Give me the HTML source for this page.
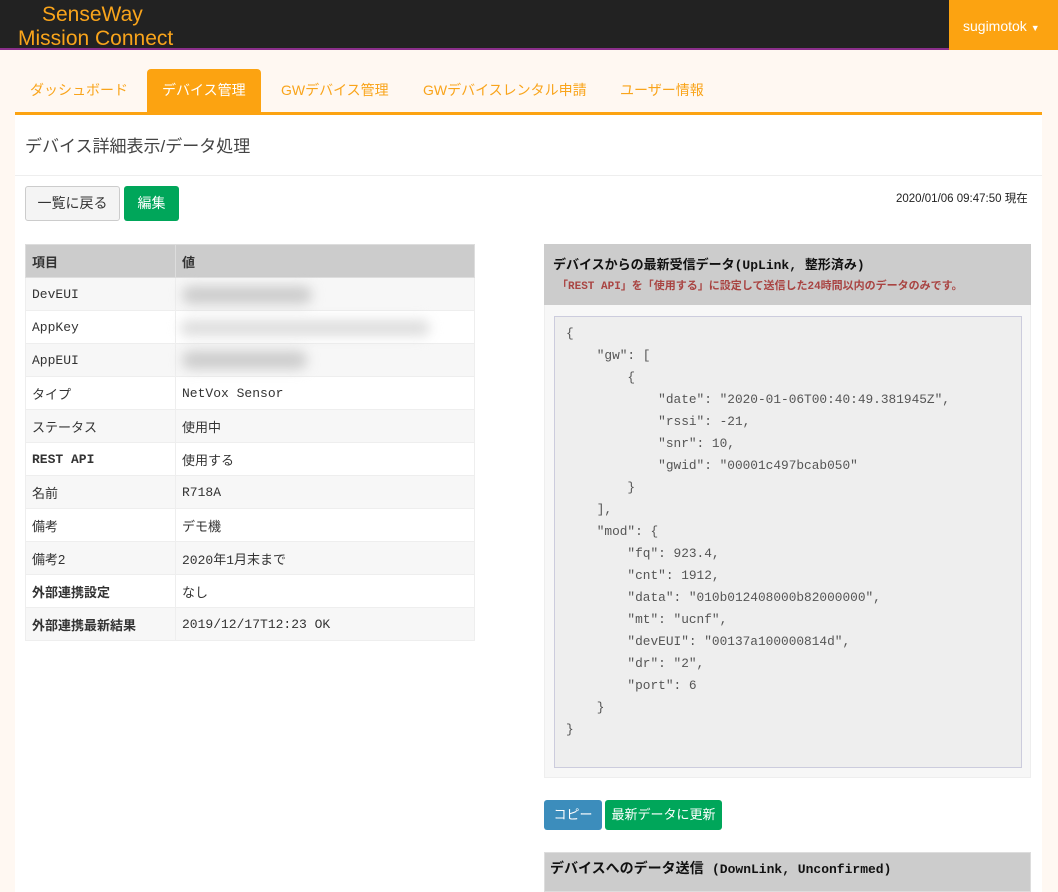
<!DOCTYPE html>
<html><head><meta charset="utf-8"><style>
*{box-sizing:border-box;margin:0;padding:0}
body{width:1058px;height:878px;overflow:hidden;background:#fff8f2;font-family:"Liberation Sans","Noto Sans CJK JP",sans-serif;font-size:14px;color:#333;position:relative}
.nav{position:absolute;left:0;top:0;width:1058px;height:50px;background:#222;border-bottom:2px solid #8b2f8b}
.logo{position:absolute;color:#f9a41b;font-size:21px;line-height:24px;text-align:center}
.user{position:absolute;left:949px;top:0;width:109px;height:50px;background:#fca311;color:#fff;font-size:14px;line-height:52px;padding-left:14px}
.tabs{position:absolute;left:15px;top:69px}
.tab{position:absolute;top:0;height:43px;line-height:42px;color:#f9a41b;font-size:14px;white-space:nowrap}
.tab.act{background:#fca311;color:#fff;border-radius:4px 4px 0 0;padding:0 15px}
.panel{position:absolute;left:15px;top:112px;width:1027px;height:780px;background:#fff;border-top:3px solid #fca311}
.mono{font-family:"Liberation Mono","Noto Sans CJK JP",monospace}
table{position:absolute;left:25px;top:244px;width:450px;border-collapse:collapse;font-size:13px}
td,th{height:33px;padding:0 6px;text-align:left;border:1px solid #eee}
th{background:#ccc;font-weight:bold;height:33px;border:1px solid #ddd}
tr:nth-child(even) td{background:#f7f7f7}
td:first-child{width:150px}
.btn{position:absolute;border-radius:3px;font-size:14px;text-align:center}
pre{position:absolute;left:554px;top:316px;width:468px;height:452px;background:#eee;border:1px solid #ccd;font-family:"Liberation Mono",monospace;font-size:12.8px;line-height:22px;color:#555;padding:6px 11px}
.blur{position:absolute;background:#ccc;filter:blur(6px);border-radius:10px}
</style></head><body>
<div class="nav">
<div class="logo" style="left:42px;top:3px">SenseWay</div>
<div class="logo" style="left:18px;top:27px">Mission Connect</div>
<div class="user">sugimotok <span style="font-size:9px">▼</span></div>
</div>
<div class="tabs">
<div class="tab" style="left:15px">ダッシュボード</div>
<div class="tab act" style="left:132px">デバイス管理</div>
<div class="tab" style="left:266px">GWデバイス管理</div>
<div class="tab" style="left:408px">GWデバイスレンタル申請</div>
<div class="tab" style="left:605px">ユーザー情報</div>
</div>
<div class="panel"></div>
<div style="position:absolute;left:25px;top:132px;font-size:17px;color:#444">デバイス詳細表示/データ処理</div>
<div style="position:absolute;left:15px;top:175px;width:1027px;border-top:1px solid #eee"></div>
<div class="btn" style="left:25px;top:186px;width:95px;height:35px;line-height:33px;background:#f4f4f4;border:1px solid #ccc;color:#333">一覧に戻る</div>
<div class="btn" style="left:124px;top:186px;width:55px;height:35px;line-height:35px;background:#00a65a;color:#fff">編集</div>
<div style="position:absolute;left:896px;top:190px;font-size:11.5px;color:#222">2020/01/06 09:47:50 現在</div>
<table>
<tr><th>項目</th><th>値</th></tr>
<tr><td class="mono">DevEUI</td><td></td></tr>
<tr><td class="mono">AppKey</td><td></td></tr>
<tr><td class="mono">AppEUI</td><td></td></tr>
<tr><td>タイプ</td><td class="mono">NetVox Sensor</td></tr>
<tr><td>ステータス</td><td>使用中</td></tr>
<tr><td class="mono" style="font-weight:bold">REST API</td><td>使用する</td></tr>
<tr><td>名前</td><td class="mono">R718A</td></tr>
<tr><td>備考</td><td>デモ機</td></tr>
<tr><td>備考2</td><td class="mono">2020年1月末まで</td></tr>
<tr><td style="font-weight:bold">外部連携設定</td><td>なし</td></tr>
<tr><td style="font-weight:bold">外部連携最新結果</td><td class="mono">2019/12/17T12:23 OK</td></tr>
</table>
<div class="blur" style="left:182px;top:286px;width:130px;height:18px"></div>
<div class="blur" style="left:180px;top:320px;width:250px;height:16px;background:#ddd"></div>
<div class="blur" style="left:182px;top:351px;width:125px;height:18px"></div>
<div style="position:absolute;left:544px;top:244px;width:487px;height:534px;background:#f7f7f7;border:1px solid #eee"></div>
<div style="position:absolute;left:544px;top:244px;width:487px;height:61px;background:#ccc"></div>
<div style="position:absolute;left:553px;top:254px;font-size:13px;color:#111;font-weight:bold;font-family:'Liberation Mono','Noto Sans CJK JP',monospace">デバイスからの最新受信データ(UpLink, 整形済み)</div>
<div style="position:absolute;left:557px;top:277px;font-size:11px;color:#a94442;font-weight:bold;font-family:'Liberation Mono','Noto Sans CJK JP',monospace">「REST API」を「使用する」に設定して送信した24時間以内のデータのみです。</div>
<pre>{
    "gw": [
        {
            "date": "2020-01-06T00:40:49.381945Z",
            "rssi": -21,
            "snr": 10,
            "gwid": "00001c497bcab050"
        }
    ],
    "mod": {
        "fq": 923.4,
        "cnt": 1912,
        "data": "010b012408000b82000000",
        "mt": "ucnf",
        "devEUI": "00137a100000814d",
        "dr": "2",
        "port": 6
    }
}</pre>
<div class="btn" style="left:544px;top:800px;width:58px;height:30px;line-height:30px;background:#3c8dbc;color:#fff;font-size:13px">コピー</div>
<div class="btn" style="left:605px;top:800px;width:117px;height:30px;line-height:30px;background:#00a65a;color:#fff;font-size:13px">最新データに更新</div>
<div style="position:absolute;left:544px;top:852px;width:487px;height:40px;background:#ccc;border:1px solid #ddd"></div>
<div style="position:absolute;left:550px;top:858px;font-size:14px;color:#111;font-weight:bold;font-family:'Liberation Mono','Noto Sans CJK JP',monospace">デバイスへのデータ送信 <span style="font-size:13px">(DownLink, Unconfirmed)</span></div>
</body></html>
